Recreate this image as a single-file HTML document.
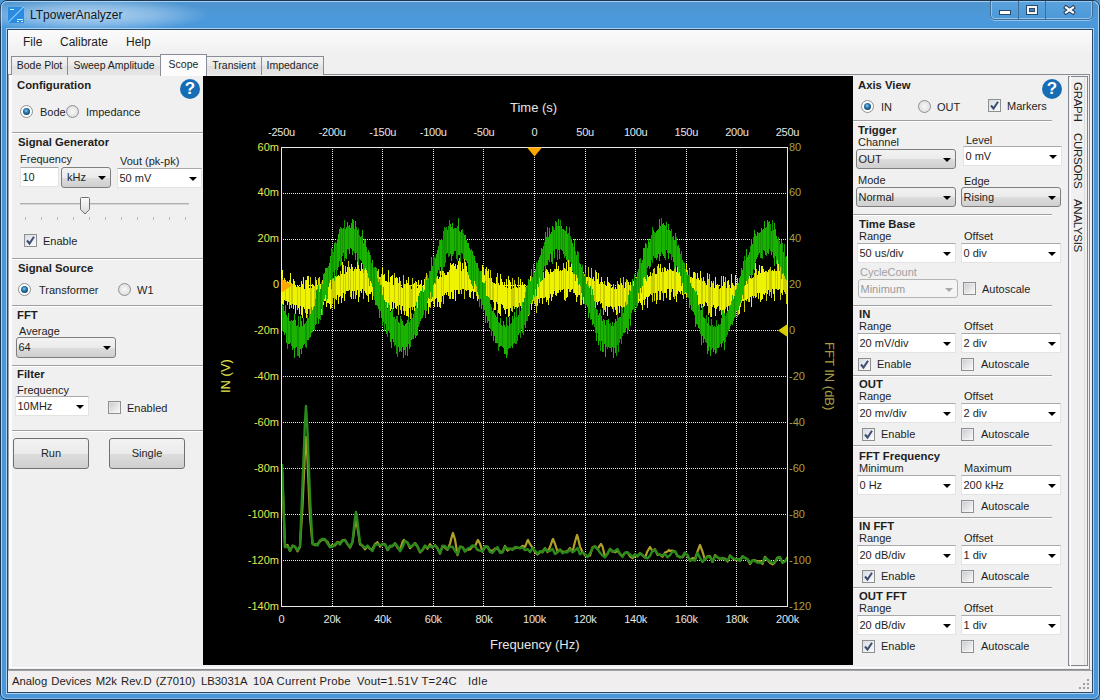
<!DOCTYPE html><html><head><meta charset="utf-8"><style>
*{margin:0;padding:0;box-sizing:border-box}
html,body{width:1100px;height:700px;overflow:hidden;background:#4a96d6}
body{position:relative;font-family:"Liberation Sans", sans-serif;font-size:10.5px;color:#000}
.a{position:absolute;white-space:nowrap}
.t{position:absolute;white-space:nowrap;font-weight:bold;font-size:11.3px;color:#1e1e1e}
.l{position:absolute;white-space:nowrap;font-size:11px;color:#1e1e1e;transform:translateY(1px)}
.cw{position:absolute;background:#fff;border-top:1px solid #a9a9a9;border-left:1px solid #e3e3e3;border-right:1px solid #e3e3e3;border-bottom:1px solid #e3e3e3}
.cb{position:absolute;border:1px solid #7e7e7e;border-radius:3px;background:linear-gradient(#f2f2f2,#ebebeb 50%,#dddddd 51%,#cfcfcf)}
.cbd{position:absolute;border:1px solid #b5b5b5;border-radius:3px;background:#f4f4f4}
.ct{position:absolute;left:1.5px;top:2.5px;font-size:11px;color:#1e1e1e}
.ar{position:absolute;right:4px;top:8px;width:0;height:0;border-left:4px solid transparent;border-right:4px solid transparent;border-top:4px solid #000}
.chk{position:absolute;width:13px;height:13px;border:1px solid #8e8f8f;background:linear-gradient(135deg,#d8dde6,#fbfbfb)}
.chk i{position:absolute;left:1px;top:1px;width:9px;height:9px;background:linear-gradient(135deg,#cfcfcf,#f6f6f6)}
.rad{position:absolute;width:13px;height:13px;border-radius:50%;border:1px solid #8e8f8f;background:radial-gradient(circle at 50% 50%,#f9f9f9,#d6d6d6)}
.rad.on{background:radial-gradient(circle at 50% 50%,#fff 0,#fff 100%)}
.rad.on i{position:absolute;left:2px;top:2px;width:7px;height:7px;border-radius:50%;background:radial-gradient(circle at 45% 40%,#8fd0f0 0,#2a7bb0 35%,#124a78 70%,#0c3050)}
.sep{position:absolute;height:2px;border-top:1px solid #a0a0a0;border-bottom:1px solid #fff}
.help{position:absolute;width:20px;height:20px;border-radius:50%;background:#176db5;color:#fff;font-weight:bold;font-size:17px;text-align:center;line-height:20px}
.btn{position:absolute;border:1px solid #707070;border-radius:3px;background:linear-gradient(#f2f2f2,#ebebeb 50%,#dddddd 51%,#cfcfcf);text-align:center;font-size:11px;color:#1e1e1e}
.tab{position:absolute;top:56px;height:19px;border:1px solid #898c95;border-bottom:none;background:linear-gradient(#f3f3f3,#e9e9e9 50%,#e0e0e0 51%,#e6e6e6);font-size:10.5px;color:#1e1e1e;text-align:center;line-height:17px}
.xl{position:absolute;font-size:11px;letter-spacing:-0.25px;color:#e6e6e6;text-align:center;width:40px;margin-left:-20px}
.yl{position:absolute;font-size:11px;color:#e5e54e;text-align:right;width:50px}
.yr{position:absolute;font-size:11px;color:#a8a040;text-align:left}
</style></head><body>

<div class="a" style="left:0;top:0;width:1100px;height:700px;border:1px solid #1c3550;border-radius:7px;background:linear-gradient(#4f95cf,#4b99dc 20px,#4a97d8 40px,#4a96d6)"></div>
<div class="a" style="left:1px;top:1px;width:1098px;height:698px;border:1px solid #a6d0f2;border-radius:6px;border-bottom-color:#7fb6e4"></div>
<div class="a" style="left:0;top:1px;width:260px;height:28px;background:radial-gradient(ellipse 120px 17px at 90px 14px,rgba(215,232,248,0.75) 0,rgba(190,218,242,0.5) 55%,rgba(150,195,235,0) 100%)"></div>
<div class="a" style="left:8px;top:7px;width:16px;height:16px;background:#2a8be0;overflow:hidden"><div class="a" style="left:-3px;top:7px;width:22px;height:1px;background:#8cd0ff;transform:rotate(-45deg)"></div><div class="a" style="left:2px;top:2px;width:4px;height:1px;background:#bff"></div><div class="a" style="left:9px;top:12px;width:6px;height:1px;background:#bfe"></div><div class="a" style="left:9px;top:14px;width:2px;height:1px;background:#bfe"></div><div class="a" style="left:13px;top:14px;width:2px;height:1px;background:#bfe"></div></div>
<div class="a" style="left:30px;top:8px;font-size:12px;color:#101820">LTpowerAnalyzer</div>
<div class="a" style="left:990px;top:1px;width:103px;height:19px;border:1px solid #3f6d96;border-top:none;border-radius:0 0 5px 5px;background:linear-gradient(#5aa2dc,#4c98d8);box-shadow:inset 0 0 0 1px rgba(190,225,250,0.6),0 1px 0 rgba(190,225,250,0.6)"></div>
<div class="a" style="left:1018px;top:1px;width:1px;height:18px;background:#3f6d96"></div>
<div class="a" style="left:1045px;top:1px;width:1px;height:18px;background:#3f6d96"></div>
<div class="a" style="left:999px;top:10px;width:12px;height:5px;background:#fff;border:1px solid #2a4a6a"></div>
<div class="a" style="left:1026px;top:5px;width:12px;height:10px;border:1px solid #2a4a6a;background:#f4f4f4"><div class="a" style="left:2px;top:2px;width:6px;height:4px;background:#4a7fb8;border:1px solid #2a4a6a"></div></div>
<svg class="a" style="left:1062px;top:4px" width="15" height="12" viewBox="0 0 15 12"><path d="M4 3.5 L11 8.5 M11 3.5 L4 8.5" stroke="#1f3550" stroke-width="4" stroke-linecap="square"/><path d="M4 3.5 L11 8.5 M11 3.5 L4 8.5" stroke="#f8f8f8" stroke-width="2.2" stroke-linecap="square"/></svg>
<div class="a" style="left:7px;top:29px;width:1086px;height:664px;border:1px solid #2b4766;background:#f0f0f0;box-shadow:0 0 0 1px #a8d0f0"></div>
<div class="a" style="left:8px;top:30px;width:1084px;height:25px;background:linear-gradient(#fbfbfb,#f0f0f0)"></div>
<div class="a" style="left:23px;top:35px;font-size:12px;color:#1e1e1e">File</div>
<div class="a" style="left:60px;top:35px;font-size:12px;color:#1e1e1e">Calibrate</div>
<div class="a" style="left:126px;top:35px;font-size:12px;color:#1e1e1e">Help</div>
<div class="a" style="left:8px;top:74px;width:1082px;height:596px;border:1px solid #898c95;border-left-color:#a0a0a0;background:#f0f0f0"></div>
<div class="a" style="left:9px;top:75px;width:3px;height:593px;background:#fbfbfb"></div>
<div class="a" style="left:9px;top:667px;width:1080px;height:1px;background:#fff"></div>
<div class="tab" style="left:11px;width:57px">Bode Plot</div>
<div class="tab" style="left:67px;width:94px">Sweep Amplitude</div>
<div class="tab" style="left:206px;width:56px">Transient</div>
<div class="tab" style="left:261px;width:63px">Impedance</div>
<div class="tab" style="left:160px;width:47px;top:54px;height:22px;background:#fcfcfc;line-height:19px">Scope</div>
<div class="a" style="left:8px;top:670px;width:1084px;height:22px;border-top:1px solid #a0a0a0;background:#f0eeee"></div>
<div class="a" style="left:12px;top:675px;font-size:11.3px;color:#1e1e1e;word-spacing:1px">Analog Devices M2k Rev.D (Z7010)</div>
<div class="a" style="left:201px;top:675px;font-size:11.3px;color:#1e1e1e">LB3031A</div>
<div class="a" style="left:253px;top:675px;font-size:11.3px;color:#1e1e1e;letter-spacing:0.25px">10A Current Probe</div>
<div class="a" style="left:357px;top:675px;font-size:11.3px;color:#1e1e1e;letter-spacing:0.25px">Vout=1.51V T=24C</div>
<div class="a" style="left:468px;top:675px;font-size:11.3px;color:#1e1e1e;letter-spacing:0.4px">Idle</div>
<div class="a" style="left:1087px;top:679px;width:2px;height:2px;background:#a0a0a0"></div>
<div class="a" style="left:1083px;top:683px;width:2px;height:2px;background:#a0a0a0"></div>
<div class="a" style="left:1087px;top:683px;width:2px;height:2px;background:#a0a0a0"></div>
<div class="a" style="left:1079px;top:687px;width:2px;height:2px;background:#a0a0a0"></div>
<div class="a" style="left:1083px;top:687px;width:2px;height:2px;background:#a0a0a0"></div>
<div class="a" style="left:1087px;top:687px;width:2px;height:2px;background:#a0a0a0"></div>
<div class="t" style="left:17px;top:79px">Configuration</div>
<div class="help" style="left:180px;top:79px">?</div>
<div class="rad on" style="left:20px;top:105px"><i></i></div><div class="l" style="left:40px;top:105px">Bode</div>
<div class="rad" style="left:66px;top:105px"></div><div class="l" style="left:86px;top:105px">Impedance</div>
<div class="sep" style="left:12px;top:132px;width:191px"></div>
<div class="t" style="left:18px;top:136px">Signal Generator</div>
<div class="l" style="left:20px;top:152px">Frequency</div>
<div class="l" style="left:120px;top:154px">Vout (pk-pk)</div>
<div class="cw" style="left:20px;top:167px;width:39px;height:20px"><span class="ct">10</span></div>
<div class="cb" style="left:61px;top:167px;width:50px;height:21px"><span class="ct" style="left:5px">kHz</span><i class="ar"></i></div>
<div class="cw" style="left:117px;top:168px;width:85px;height:20px"><span class="ct">50 mV</span><i class="ar"></i></div>
<div class="a" style="left:20px;top:203px;width:169px;height:2px;background:#d6d6d6;border-top:1px solid #b0b0b0"></div>
<svg class="a" style="left:78px;top:195px" width="14" height="22" viewBox="78 195 14 22"><defs><linearGradient id="tg" x1="0" y1="0" x2="0" y2="1"><stop offset="0" stop-color="#fafafa"/><stop offset="0.5" stop-color="#ececec"/><stop offset="1" stop-color="#d4d4d4"/></linearGradient></defs><path d="M80.5 198.5 Q80.5 197.5 81.5 197.5 H88.5 Q89.5 197.5 89.5 198.5 V209.5 L85 214 L80.5 209.5 Z" fill="url(#tg)" stroke="#707070" stroke-width="1"/></svg>
<div class="a" style="left:25px;top:217px;width:1px;height:3px;background:#b8b8b8"></div>
<div class="a" style="left:41px;top:217px;width:1px;height:3px;background:#b8b8b8"></div>
<div class="a" style="left:57px;top:217px;width:1px;height:3px;background:#b8b8b8"></div>
<div class="a" style="left:73px;top:217px;width:1px;height:3px;background:#b8b8b8"></div>
<div class="a" style="left:89px;top:217px;width:1px;height:3px;background:#b8b8b8"></div>
<div class="a" style="left:105px;top:217px;width:1px;height:3px;background:#b8b8b8"></div>
<div class="a" style="left:121px;top:217px;width:1px;height:3px;background:#b8b8b8"></div>
<div class="a" style="left:137px;top:217px;width:1px;height:3px;background:#b8b8b8"></div>
<div class="a" style="left:153px;top:217px;width:1px;height:3px;background:#b8b8b8"></div>
<div class="a" style="left:169px;top:217px;width:1px;height:3px;background:#b8b8b8"></div>
<div class="a" style="left:185px;top:217px;width:1px;height:3px;background:#b8b8b8"></div>
<div class="a" style="left:185px;top:217px;width:1px;height:3px;background:#b8b8b8"></div>
<div class="chk" style="left:24px;top:234px"><svg style="position:absolute;left:0;top:0" width="11" height="11" viewBox="0 0 11 11"><path d="M2 5.5 L4.5 8.5 L9 1.8" stroke="#3d4b70" stroke-width="2" fill="none"/></svg></div><div class="l" style="left:43px;top:234px">Enable</div>
<div class="sep" style="left:12px;top:258px;width:191px"></div>
<div class="t" style="left:18px;top:262px">Signal Source</div>
<div class="rad on" style="left:18px;top:283px"><i></i></div><div class="l" style="left:39px;top:283px">Transformer</div>
<div class="rad" style="left:118px;top:283px"></div><div class="l" style="left:137px;top:283px">W1</div>
<div class="sep" style="left:12px;top:305px;width:191px"></div>
<div class="t" style="left:17px;top:309px">FFT</div>
<div class="l" style="left:19px;top:324px">Average</div>
<div class="cb" style="left:16px;top:337px;width:100px;height:21px"><span class="ct">64</span><i class="ar"></i></div>
<div class="sep" style="left:12px;top:365px;width:191px"></div>
<div class="t" style="left:17px;top:368px">Filter</div>
<div class="l" style="left:17px;top:383px">Frequency</div>
<div class="cw" style="left:15px;top:396px;width:74px;height:20px"><span class="ct">10MHz</span><i class="ar"></i></div>
<div class="chk" style="left:108px;top:401px"><i></i></div><div class="l" style="left:127px;top:401px">Enabled</div>
<div class="sep" style="left:12px;top:430px;width:191px"></div>
<div class="btn" style="left:13px;top:438px;width:76px;height:31px;line-height:29px">Run</div>
<div class="btn" style="left:109px;top:438px;width:76px;height:31px;line-height:29px">Single</div>
<div class="t" style="left:858px;top:79px">Axis View</div>
<div class="help" style="left:1042px;top:79px">?</div>
<div class="rad on" style="left:861px;top:100px"><i></i></div><div class="l" style="left:881px;top:100px">IN</div>
<div class="rad" style="left:918px;top:100px"></div><div class="l" style="left:937px;top:100px">OUT</div>
<div class="chk" style="left:988px;top:99px"><svg style="position:absolute;left:0;top:0" width="11" height="11" viewBox="0 0 11 11"><path d="M2 5.5 L4.5 8.5 L9 1.8" stroke="#3d4b70" stroke-width="2" fill="none"/></svg></div><div class="l" style="left:1007px;top:99px">Markers</div>
<div class="sep" style="left:853px;top:120px;width:199px"></div>
<div class="t" style="left:858px;top:124px">Trigger</div>
<div class="l" style="left:858px;top:135px">Channel</div>
<div class="l" style="left:966px;top:133px">Level</div>
<div class="cb" style="left:856px;top:149px;width:100px;height:20px"><span class="ct">OUT</span><i class="ar"></i></div>
<div class="cw" style="left:963px;top:146px;width:99px;height:20px"><span class="ct">0 mV</span><i class="ar"></i></div>
<div class="l" style="left:858px;top:173px">Mode</div>
<div class="l" style="left:964px;top:174px">Edge</div>
<div class="cb" style="left:856px;top:187px;width:100px;height:20px"><span class="ct">Normal</span><i class="ar"></i></div>
<div class="cb" style="left:961px;top:187px;width:100px;height:20px"><span class="ct">Rising</span><i class="ar"></i></div>
<div class="sep" style="left:853px;top:214px;width:199px"></div>
<div class="t" style="left:859px;top:218px">Time Base</div>
<div class="l" style="left:859px;top:229px">Range</div>
<div class="l" style="left:964px;top:229px">Offset</div>
<div class="cw" style="left:857px;top:243px;width:99px;height:20px"><span class="ct">50 us/div</span><i class="ar"></i></div>
<div class="cw" style="left:961px;top:243px;width:100px;height:20px"><span class="ct">0 div</span><i class="ar"></i></div>
<div class="l" style="left:860px;top:265px;color:#a0a0a0">CycleCount</div>
<div class="cbd" style="left:858px;top:279px;width:100px;height:19px"><span class="ct" style="color:#9a9a9a">Minimum</span><i class="ar" style="border-top-color:#a8a8a8"></i></div>
<div class="chk" style="left:963px;top:282px"><i></i></div><div class="l" style="left:982px;top:282px">Autoscale</div>
<div class="sep" style="left:853px;top:305px;width:199px"></div>
<div class="t" style="left:859px;top:308px">IN</div>
<div class="l" style="left:859px;top:319px">Range</div>
<div class="l" style="left:964px;top:319px">Offset</div>
<div class="cw" style="left:857px;top:333px;width:99px;height:20px"><span class="ct">20 mV/div</span><i class="ar"></i></div>
<div class="cw" style="left:961px;top:333px;width:100px;height:20px"><span class="ct">2 div</span><i class="ar"></i></div>
<div class="chk" style="left:858px;top:358px"><svg style="position:absolute;left:0;top:0" width="11" height="11" viewBox="0 0 11 11"><path d="M2 5.5 L4.5 8.5 L9 1.8" stroke="#3d4b70" stroke-width="2" fill="none"/></svg></div><div class="l" style="left:877px;top:357px">Enable</div>
<div class="chk" style="left:961px;top:358px"><i></i></div><div class="l" style="left:981px;top:357px">Autoscale</div>
<div class="sep" style="left:853px;top:375px;width:199px"></div>
<div class="t" style="left:859px;top:378px">OUT</div>
<div class="l" style="left:859px;top:389px">Range</div>
<div class="l" style="left:964px;top:389px">Offset</div>
<div class="cw" style="left:857px;top:403px;width:99px;height:20px"><span class="ct">20 mv/div</span><i class="ar"></i></div>
<div class="cw" style="left:961px;top:403px;width:100px;height:20px"><span class="ct">2 div</span><i class="ar"></i></div>
<div class="chk" style="left:862px;top:428px"><svg style="position:absolute;left:0;top:0" width="11" height="11" viewBox="0 0 11 11"><path d="M2 5.5 L4.5 8.5 L9 1.8" stroke="#3d4b70" stroke-width="2" fill="none"/></svg></div><div class="l" style="left:881px;top:427px">Enable</div>
<div class="chk" style="left:961px;top:428px"><i></i></div><div class="l" style="left:981px;top:427px">Autoscale</div>
<div class="sep" style="left:853px;top:445px;width:199px"></div>
<div class="t" style="left:859px;top:450px">FFT Frequency</div>
<div class="l" style="left:859px;top:461px">Minimum</div>
<div class="l" style="left:964px;top:461px">Maximum</div>
<div class="cw" style="left:857px;top:475px;width:99px;height:20px"><span class="ct">0 Hz</span><i class="ar"></i></div>
<div class="cw" style="left:961px;top:475px;width:100px;height:20px"><span class="ct">200 kHz</span><i class="ar"></i></div>
<div class="chk" style="left:961px;top:500px"><i></i></div><div class="l" style="left:981px;top:499px">Autoscale</div>
<div class="sep" style="left:853px;top:517px;width:199px"></div>
<div class="t" style="left:859px;top:520px">IN FFT</div>
<div class="l" style="left:859px;top:531px">Range</div>
<div class="l" style="left:964px;top:531px">Offset</div>
<div class="cw" style="left:857px;top:545px;width:99px;height:20px"><span class="ct">20 dB/div</span><i class="ar"></i></div>
<div class="cw" style="left:961px;top:545px;width:100px;height:20px"><span class="ct">1 div</span><i class="ar"></i></div>
<div class="chk" style="left:862px;top:570px"><svg style="position:absolute;left:0;top:0" width="11" height="11" viewBox="0 0 11 11"><path d="M2 5.5 L4.5 8.5 L9 1.8" stroke="#3d4b70" stroke-width="2" fill="none"/></svg></div><div class="l" style="left:881px;top:569px">Enable</div>
<div class="chk" style="left:961px;top:570px"><i></i></div><div class="l" style="left:981px;top:569px">Autoscale</div>
<div class="sep" style="left:853px;top:587px;width:199px"></div>
<div class="t" style="left:859px;top:590px">OUT FFT</div>
<div class="l" style="left:859px;top:601px">Range</div>
<div class="l" style="left:964px;top:601px">Offset</div>
<div class="cw" style="left:857px;top:615px;width:99px;height:20px"><span class="ct">20 dB/div</span><i class="ar"></i></div>
<div class="cw" style="left:961px;top:615px;width:100px;height:20px"><span class="ct">1 div</span><i class="ar"></i></div>
<div class="chk" style="left:862px;top:640px"><svg style="position:absolute;left:0;top:0" width="11" height="11" viewBox="0 0 11 11"><path d="M2 5.5 L4.5 8.5 L9 1.8" stroke="#3d4b70" stroke-width="2" fill="none"/></svg></div><div class="l" style="left:881px;top:639px">Enable</div>
<div class="chk" style="left:961px;top:640px"><i></i></div><div class="l" style="left:981px;top:639px">Autoscale</div>
<div class="a" style="left:1068px;top:76px;width:20px;height:590px;border:1px solid #828790;background:#f0f0f0"></div>
<div class="a" style="left:1070px;top:76px;width:1px;height:590px;background:#fff"></div>
<div class="a" style="left:1084px;top:77px;width:1px;height:588px;background:#dcdcdc"></div>
<div class="a" style="left:1078px;top:82px;width:0;height:0"><div class="a" style="left:0;top:0;transform-origin:0 0;transform:rotate(90deg) translate(0,-6px);font-size:11.5px;color:#1e1e1e;letter-spacing:-0.3px">GRAPH</div></div>
<div class="a" style="left:1078px;top:133px;width:0;height:0"><div class="a" style="left:0;top:0;transform-origin:0 0;transform:rotate(90deg) translate(0,-6px);font-size:11.5px;color:#1e1e1e;letter-spacing:-0.3px">CURSORS</div></div>
<div class="a" style="left:1078px;top:199px;width:0;height:0"><div class="a" style="left:0;top:0;transform-origin:0 0;transform:rotate(90deg) translate(0,-6px);font-size:11.5px;color:#1e1e1e;letter-spacing:-0.3px">ANALYSIS</div></div>
<div class="a" style="left:203px;top:76px;width:650px;height:589px;background:#000"></div>
<div class="a" style="left:332px;top:149px;width:1px;height:457px;background:repeating-linear-gradient(#e8e8e8 0 1px,transparent 1px 2px)"></div>
<div class="a" style="left:382px;top:149px;width:1px;height:457px;background:repeating-linear-gradient(#e8e8e8 0 1px,transparent 1px 2px)"></div>
<div class="a" style="left:433px;top:149px;width:1px;height:457px;background:repeating-linear-gradient(#e8e8e8 0 1px,transparent 1px 2px)"></div>
<div class="a" style="left:483px;top:149px;width:1px;height:457px;background:repeating-linear-gradient(#e8e8e8 0 1px,transparent 1px 2px)"></div>
<div class="a" style="left:534px;top:149px;width:1px;height:457px;background:repeating-linear-gradient(#e8e8e8 0 1px,transparent 1px 2px)"></div>
<div class="a" style="left:585px;top:149px;width:1px;height:457px;background:repeating-linear-gradient(#e8e8e8 0 1px,transparent 1px 2px)"></div>
<div class="a" style="left:635px;top:149px;width:1px;height:457px;background:repeating-linear-gradient(#e8e8e8 0 1px,transparent 1px 2px)"></div>
<div class="a" style="left:686px;top:149px;width:1px;height:457px;background:repeating-linear-gradient(#e8e8e8 0 1px,transparent 1px 2px)"></div>
<div class="a" style="left:736px;top:149px;width:1px;height:457px;background:repeating-linear-gradient(#e8e8e8 0 1px,transparent 1px 2px)"></div>
<div class="a" style="left:283px;top:193px;width:504px;height:1px;background:repeating-linear-gradient(90deg,#e8e8e8 0 1px,transparent 1px 2px)"></div>
<div class="a" style="left:283px;top:239px;width:504px;height:1px;background:repeating-linear-gradient(90deg,#e8e8e8 0 1px,transparent 1px 2px)"></div>
<div class="a" style="left:283px;top:285px;width:504px;height:1px;background:repeating-linear-gradient(90deg,#e8e8e8 0 1px,transparent 1px 2px)"></div>
<div class="a" style="left:283px;top:330px;width:504px;height:1px;background:repeating-linear-gradient(90deg,#e8e8e8 0 1px,transparent 1px 2px)"></div>
<div class="a" style="left:283px;top:376px;width:504px;height:1px;background:repeating-linear-gradient(90deg,#e8e8e8 0 1px,transparent 1px 2px)"></div>
<div class="a" style="left:283px;top:422px;width:504px;height:1px;background:repeating-linear-gradient(90deg,#e8e8e8 0 1px,transparent 1px 2px)"></div>
<div class="a" style="left:283px;top:468px;width:504px;height:1px;background:repeating-linear-gradient(90deg,#e8e8e8 0 1px,transparent 1px 2px)"></div>
<div class="a" style="left:283px;top:514px;width:504px;height:1px;background:repeating-linear-gradient(90deg,#e8e8e8 0 1px,transparent 1px 2px)"></div>
<div class="a" style="left:283px;top:560px;width:504px;height:1px;background:repeating-linear-gradient(90deg,#e8e8e8 0 1px,transparent 1px 2px)"></div>
<svg class="a" style="left:0;top:0" width="1100" height="700" viewBox="0 0 1100 700">
<path d="M282.5 270 V311M283.5 282 V305M284.5 278 V300M286.5 283 V301M287.5 281 V305M288.5 282 V302M290.5 273 V305M293.5 279 V309M294.5 281 V305M295.5 285 V314M296.5 287 V305M298.5 286 V308M299.5 287 V314M301.5 281 V315M302.5 284 V318M303.5 277 V307M304.5 289 V309M306.5 280 V318M307.5 276 V314M308.5 276 V309M309.5 288 V310M312.5 284 V315M313.5 285 V316M316.5 280 V314M320.5 284 V308M323.5 280 V305M324.5 277 V301M325.5 275 V301M326.5 282 V307M327.5 279 V303M328.5 275 V303M329.5 277 V304M330.5 279 V309M336.5 274 V300M337.5 276 V295M338.5 275 V304M339.5 276 V297M341.5 274 V303M342.5 262 V298M344.5 274 V301M346.5 272 V291M347.5 267 V291M349.5 267 V290M351.5 264 V299M352.5 267 V291M354.5 269 V291M356.5 269 V295M357.5 260 V290M358.5 258 V302M360.5 271 V291M361.5 263 V293M362.5 269 V289M365.5 266 V293M366.5 263 V295M368.5 268 V302M369.5 267 V294M370.5 264 V294M371.5 274 V292M372.5 262 V300M373.5 268 V294M374.5 270 V293M379.5 277 V297M382.5 267 V297M383.5 275 V308M384.5 274 V310M385.5 281 V310M386.5 281 V308M387.5 282 V308M388.5 270 V306M390.5 277 V311M391.5 276 V309M392.5 275 V302M393.5 285 V309M395.5 278 V308M396.5 277 V309M397.5 278 V306M399.5 277 V305M401.5 287 V314M402.5 288 V306M404.5 284 V315M406.5 280 V316M407.5 283 V316M408.5 277 V318M413.5 284 V307M414.5 283 V319M416.5 282 V314M417.5 288 V317M418.5 280 V309M419.5 286 V305M420.5 284 V313M421.5 280 V307M423.5 286 V314M424.5 279 V303M428.5 280 V314M429.5 278 V307M431.5 280 V302M432.5 282 V301M434.5 269 V307M435.5 270 V299M437.5 276 V307M438.5 279 V302M439.5 277 V307M440.5 271 V308M442.5 269 V296M444.5 273 V295M445.5 275 V293M446.5 275 V295M447.5 272 V292M448.5 272 V296M450.5 263 V299M451.5 265 V292M452.5 264 V299M453.5 263 V299M454.5 266 V290M455.5 264 V301M456.5 269 V290M457.5 265 V290M458.5 261 V294M460.5 262 V290M462.5 263 V289M463.5 269 V289M465.5 262 V290M466.5 266 V291M468.5 261 V290M469.5 271 V297M470.5 270 V298M471.5 270 V292M472.5 267 V291M473.5 272 V299M474.5 273 V292M477.5 271 V301M479.5 272 V299M480.5 276 V296M482.5 265 V299M483.5 268 V305M484.5 275 V296M486.5 267 V302M488.5 269 V298M491.5 278 V300M494.5 283 V310M495.5 284 V310M496.5 277 V302M498.5 283 V313M499.5 285 V314M500.5 274 V316M501.5 279 V304M502.5 282 V305M503.5 285 V308M504.5 282 V310M505.5 287 V314M506.5 279 V309M508.5 276 V317M509.5 280 V316M510.5 282 V308M515.5 284 V307M516.5 287 V308M517.5 288 V308M519.5 287 V308M520.5 279 V306M522.5 282 V306M523.5 285 V314M524.5 284 V318M528.5 283 V316M530.5 276 V304M531.5 277 V310M537.5 272 V306M538.5 280 V299M540.5 272 V298M541.5 279 V298M542.5 275 V304M545.5 271 V297M546.5 269 V302M547.5 270 V300M548.5 272 V305M550.5 269 V294M551.5 272 V301M552.5 272 V297M553.5 271 V294M555.5 269 V295M556.5 262 V296M557.5 269 V293M558.5 266 V293M560.5 270 V292M562.5 270 V290M564.5 268 V300M566.5 262 V298M567.5 271 V297M568.5 260 V289M570.5 267 V292M571.5 263 V290M572.5 272 V289M574.5 272 V293M575.5 272 V295M576.5 273 V302M577.5 272 V297M579.5 273 V295M581.5 273 V305M583.5 272 V304M586.5 277 V295M587.5 277 V297M589.5 277 V298M590.5 278 V297M592.5 279 V306M593.5 277 V306M596.5 272 V302M597.5 279 V305M598.5 273 V302M599.5 284 V301M601.5 277 V303M602.5 282 V308M605.5 286 V312M606.5 286 V306M607.5 277 V316M608.5 282 V307M609.5 283 V307M611.5 288 V307M612.5 287 V309M615.5 287 V310M616.5 289 V315M618.5 284 V306M619.5 286 V313M621.5 283 V307M624.5 288 V307M625.5 282 V306M628.5 282 V313M630.5 282 V308M631.5 286 V304M632.5 285 V309M633.5 281 V309M636.5 277 V302M637.5 281 V305M638.5 283 V303M639.5 282 V301M640.5 276 V303M641.5 281 V305M642.5 278 V310M644.5 274 V305M645.5 279 V299M646.5 274 V297M647.5 275 V308M648.5 277 V297M649.5 276 V296M650.5 272 V294M655.5 274 V293M656.5 274 V304M658.5 264 V291M660.5 264 V300M661.5 272 V291M664.5 267 V293M665.5 268 V293M666.5 271 V298M667.5 269 V289M669.5 263 V300M670.5 269 V300M672.5 271 V289M673.5 271 V297M676.5 272 V302M677.5 263 V294M678.5 272 V291M679.5 263 V292M680.5 260 V294M681.5 269 V291M682.5 273 V295M686.5 264 V298M688.5 275 V295M689.5 268 V302M690.5 277 V303M692.5 278 V296M693.5 272 V300M694.5 272 V306M697.5 273 V299M698.5 278 V305M699.5 280 V306M700.5 271 V304M703.5 277 V307M704.5 281 V306M706.5 285 V303M707.5 273 V306M711.5 281 V317M713.5 281 V305M714.5 288 V308M715.5 277 V316M716.5 285 V309M717.5 284 V307M720.5 288 V310M722.5 286 V310M723.5 276 V316M724.5 282 V314M727.5 281 V315M728.5 280 V306M730.5 288 V317M731.5 274 V308M732.5 283 V310M733.5 286 V310M735.5 275 V305M739.5 282 V314M740.5 284 V307M742.5 278 V301M743.5 282 V301M745.5 281 V300M746.5 279 V301M747.5 274 V299M749.5 271 V302M750.5 278 V297M751.5 268 V307M752.5 278 V296M755.5 263 V298M757.5 275 V293M758.5 271 V299M759.5 265 V293M760.5 273 V302M761.5 266 V300M762.5 266 V299M763.5 269 V294M764.5 272 V295M765.5 271 V293M767.5 272 V294M768.5 270 V290M772.5 270 V289M773.5 271 V294M774.5 269 V301M776.5 271 V289M778.5 259 V290M779.5 268 V289M781.5 267 V293M782.5 272 V295" stroke="#eef400" stroke-width="1" fill="none"/>
<path d="M285.5 280 V301M289.5 280 V309M291.5 283 V308M292.5 284 V304M297.5 286 V310M300.5 287 V306M305.5 280 V313M310.5 277 V318M311.5 288 V310M314.5 286 V316M315.5 277 V312M317.5 286 V306M318.5 278 V309M319.5 277 V304M321.5 284 V315M322.5 280 V307M331.5 270 V308M332.5 271 V304M333.5 278 V298M334.5 277 V309M335.5 276 V299M340.5 271 V296M343.5 265 V293M345.5 266 V294M348.5 261 V291M350.5 269 V297M353.5 271 V299M355.5 267 V299M359.5 269 V297M363.5 269 V299M364.5 269 V291M367.5 268 V296M375.5 272 V298M376.5 276 V297M377.5 271 V296M378.5 269 V300M380.5 277 V297M381.5 274 V305M389.5 282 V305M394.5 273 V303M398.5 283 V315M400.5 281 V310M403.5 275 V311M405.5 284 V311M409.5 285 V308M410.5 285 V319M411.5 289 V307M412.5 278 V310M415.5 281 V306M422.5 286 V315M425.5 277 V309M426.5 273 V308M427.5 284 V303M430.5 280 V308M433.5 281 V303M436.5 274 V298M441.5 277 V302M443.5 271 V304M449.5 270 V299M459.5 258 V294M461.5 271 V294M464.5 259 V299M467.5 272 V290M475.5 273 V292M476.5 264 V296M478.5 275 V299M481.5 272 V294M485.5 269 V303M487.5 271 V298M489.5 278 V303M490.5 270 V300M492.5 282 V300M493.5 283 V302M497.5 273 V304M507.5 288 V309M511.5 289 V311M512.5 278 V312M513.5 288 V306M514.5 280 V309M518.5 277 V307M521.5 285 V310M525.5 287 V305M526.5 286 V312M527.5 285 V309M529.5 283 V314M532.5 283 V304M533.5 282 V301M534.5 283 V303M535.5 275 V306M536.5 270 V313M539.5 274 V303M543.5 272 V298M544.5 278 V298M549.5 274 V298M554.5 269 V291M559.5 271 V290M561.5 271 V290M563.5 263 V289M565.5 269 V301M569.5 266 V292M573.5 272 V293M578.5 272 V295M580.5 273 V305M582.5 265 V294M584.5 274 V296M585.5 266 V295M588.5 267 V302M591.5 268 V297M594.5 281 V310M595.5 270 V309M600.5 282 V304M603.5 284 V315M604.5 281 V310M610.5 284 V306M613.5 284 V312M614.5 289 V307M617.5 281 V316M620.5 278 V306M622.5 285 V311M623.5 277 V307M626.5 279 V315M627.5 280 V314M629.5 285 V306M634.5 285 V310M635.5 284 V304M643.5 278 V300M651.5 276 V295M652.5 273 V302M653.5 269 V293M654.5 268 V301M657.5 266 V300M659.5 268 V300M662.5 268 V293M663.5 272 V301M668.5 270 V289M671.5 270 V292M674.5 259 V299M675.5 267 V296M683.5 274 V299M684.5 274 V294M685.5 273 V294M687.5 270 V295M691.5 277 V296M695.5 273 V301M696.5 279 V298M701.5 278 V308M702.5 281 V304M705.5 283 V302M708.5 279 V315M709.5 274 V313M710.5 287 V317M712.5 283 V307M718.5 285 V306M719.5 289 V311M721.5 276 V315M725.5 277 V309M726.5 288 V307M729.5 286 V307M734.5 286 V311M736.5 284 V311M737.5 278 V303M738.5 284 V315M741.5 282 V303M744.5 281 V312M748.5 278 V302M753.5 277 V298M754.5 273 V296M756.5 269 V297M766.5 271 V301M769.5 269 V296M770.5 267 V292M771.5 271 V298M775.5 271 V289M777.5 259 V290M780.5 262 V300M783.5 266 V290M784.5 263 V292M785.5 269 V294M786.5 264 V304" stroke="#c8cc00" stroke-width="1" fill="none"/>
<path d="M283.5 306 V332M284.5 311 V335M285.5 305 V333M286.5 315 V343M288.5 313 V344M289.5 321 V344M292.5 321 V350M293.5 320 V348M294.5 314 V358M295.5 320 V348M296.5 326 V347M299.5 327 V358M300.5 316 V349M301.5 321 V354M302.5 326 V348M303.5 318 V345M304.5 324 V344M307.5 315 V340M308.5 318 V340M310.5 314 V337M311.5 307 V333M312.5 310 V332M313.5 307 V330M315.5 299 V325M318.5 285 V324M319.5 292 V319M322.5 284 V315M323.5 274 V302M324.5 273 V299M325.5 268 V295M326.5 268 V301M327.5 268 V299M329.5 263 V283M330.5 256 V280M334.5 243 V281M337.5 239 V270M338.5 234 V267M339.5 229 V261M341.5 228 V265M343.5 228 V253M345.5 229 V258M346.5 227 V259M347.5 222 V249M349.5 225 V254M350.5 228 V248M351.5 223 V249M352.5 219 V255M353.5 220 V251M355.5 221 V260M357.5 230 V262M360.5 237 V260M362.5 230 V264M363.5 243 V273M364.5 239 V270M365.5 240 V268M366.5 247 V270M368.5 250 V278M369.5 252 V286M372.5 260 V287M375.5 267 V305M376.5 268 V305M377.5 278 V306M378.5 282 V309M379.5 279 V318M381.5 285 V318M382.5 295 V326M383.5 287 V322M385.5 302 V324M386.5 302 V334M388.5 303 V331M390.5 312 V342M391.5 311 V348M392.5 308 V339M393.5 317 V342M395.5 319 V345M398.5 322 V347M399.5 323 V352M401.5 319 V352M402.5 321 V347M403.5 325 V358M404.5 326 V350M405.5 324 V355M406.5 323 V347M407.5 320 V356M409.5 322 V349M411.5 313 V340M413.5 314 V339M415.5 308 V338M416.5 302 V336M417.5 308 V335M420.5 291 V321M422.5 287 V318M424.5 290 V310M425.5 277 V318M426.5 280 V311M427.5 275 V301M428.5 278 V298M430.5 271 V292M431.5 257 V299M432.5 266 V297M435.5 258 V284M436.5 254 V278M437.5 250 V273M438.5 246 V270M440.5 240 V267M441.5 239 V275M447.5 230 V253M450.5 224 V254M451.5 227 V261M452.5 223 V256M453.5 229 V254M455.5 228 V251M458.5 218 V255M459.5 231 V255M461.5 230 V253M464.5 235 V259M465.5 235 V260M466.5 240 V261M467.5 243 V263M468.5 243 V275M469.5 248 V279M470.5 250 V280M472.5 251 V286M474.5 256 V281M476.5 263 V286M477.5 263 V292M480.5 271 V299M481.5 271 V309M483.5 283 V312M484.5 283 V310M485.5 281 V323M486.5 296 V316M487.5 296 V323M488.5 297 V321M489.5 298 V328M492.5 311 V331M493.5 308 V341M494.5 313 V336M495.5 315 V343M496.5 317 V343M497.5 310 V343M499.5 323 V347M500.5 318 V346M501.5 325 V346M503.5 321 V348M504.5 325 V354M505.5 327 V354M506.5 317 V358M509.5 317 V348M512.5 316 V348M514.5 312 V343M518.5 315 V335M521.5 308 V329M522.5 302 V333M525.5 292 V328M528.5 279 V315M529.5 280 V315M530.5 281 V304M531.5 269 V303M532.5 277 V300M534.5 272 V297M535.5 269 V289M538.5 260 V287M539.5 257 V278M540.5 255 V282M541.5 248 V281M543.5 246 V271M545.5 232 V271M546.5 237 V265M547.5 227 V265M548.5 237 V260M549.5 228 V262M550.5 234 V254M551.5 232 V262M552.5 226 V264M554.5 230 V258M556.5 222 V249M558.5 219 V250M559.5 226 V259M561.5 226 V250M563.5 229 V254M565.5 231 V256M566.5 226 V260M567.5 234 V262M571.5 239 V264M572.5 243 V271M574.5 239 V274M576.5 255 V275M579.5 263 V284M580.5 264 V286M581.5 267 V293M585.5 273 V307M586.5 284 V305M587.5 281 V307M588.5 286 V318M589.5 288 V313M591.5 295 V319M592.5 289 V325M593.5 295 V324M596.5 309 V341M598.5 315 V345M599.5 313 V341M601.5 316 V341M602.5 321 V352M604.5 320 V344M605.5 325 V357M608.5 319 V347M611.5 326 V352M612.5 322 V347M613.5 326 V358M615.5 319 V353M620.5 317 V339M623.5 313 V333M624.5 307 V333M625.5 302 V332M626.5 305 V328M627.5 304 V334M628.5 295 V330M630.5 291 V326M631.5 285 V313M632.5 279 V310M637.5 272 V306M639.5 259 V299M641.5 263 V293M642.5 260 V286M643.5 248 V278M644.5 248 V277M645.5 243 V279M647.5 248 V268M648.5 239 V266M649.5 242 V269M650.5 239 V267M653.5 230 V256M655.5 233 V258M656.5 231 V260M657.5 230 V258M658.5 229 V254M659.5 219 V261M660.5 226 V256M662.5 224 V254M663.5 223 V256M664.5 225 V258M666.5 222 V250M668.5 224 V259M669.5 230 V253M670.5 231 V254M673.5 236 V262M674.5 240 V269M675.5 233 V267M677.5 246 V267M678.5 245 V273M679.5 248 V272M682.5 260 V283M684.5 263 V293M685.5 269 V292M686.5 272 V293M689.5 269 V308M691.5 286 V310M693.5 288 V312M694.5 290 V315M695.5 292 V327M696.5 291 V324M698.5 305 V328M699.5 304 V329M701.5 310 V345M702.5 306 V336M703.5 317 V343M704.5 318 V339M707.5 323 V354M708.5 317 V351M710.5 326 V356M713.5 327 V352M715.5 327 V354M717.5 326 V348M718.5 324 V348M721.5 318 V347M722.5 310 V343M723.5 310 V341M724.5 313 V350M728.5 310 V331M729.5 306 V329M730.5 305 V326M731.5 301 V324M732.5 295 V325M733.5 299 V321M735.5 290 V317M736.5 289 V311M737.5 285 V317M738.5 283 V310M739.5 278 V306M740.5 276 V303M741.5 268 V300M742.5 270 V295M743.5 261 V299M746.5 249 V281M747.5 257 V284M748.5 255 V279M749.5 252 V276M751.5 239 V279M752.5 244 V275M754.5 230 V270M755.5 234 V262M756.5 236 V259M757.5 232 V257M759.5 233 V253M761.5 228 V258M763.5 229 V250M764.5 221 V251M765.5 228 V255M767.5 220 V253M768.5 222 V254M771.5 231 V255M773.5 230 V258M774.5 223 V266M775.5 229 V256M776.5 236 V264M777.5 239 V260M780.5 244 V267M781.5 240 V279M783.5 252 V273M786.5 256 V280" stroke="#1ab400" stroke-width="1" fill="none"/>
<path d="M282.5 304 V331M287.5 317 V349M290.5 321 V343M291.5 320 V346M297.5 325 V356M298.5 316 V356M305.5 323 V347M306.5 321 V348M309.5 309 V338M314.5 306 V330M316.5 290 V324M317.5 289 V318M320.5 289 V320M321.5 282 V309M328.5 266 V287M331.5 248 V289M332.5 249 V279M333.5 252 V272M335.5 242 V270M336.5 243 V277M340.5 227 V266M342.5 229 V256M344.5 220 V261M348.5 226 V250M354.5 229 V253M356.5 227 V253M358.5 228 V265M359.5 235 V259M361.5 236 V261M367.5 252 V273M370.5 255 V281M371.5 263 V283M373.5 268 V296M374.5 267 V300M380.5 285 V311M384.5 300 V331M387.5 309 V337M389.5 305 V333M394.5 317 V346M396.5 316 V354M397.5 316 V357M400.5 316 V351M408.5 317 V344M410.5 320 V347M412.5 318 V339M414.5 311 V335M418.5 296 V327M419.5 293 V324M421.5 291 V319M423.5 292 V315M429.5 271 V299M433.5 256 V285M434.5 257 V283M439.5 239 V274M442.5 240 V271M443.5 231 V267M444.5 227 V267M445.5 228 V263M446.5 227 V254M448.5 226 V257M449.5 220 V256M454.5 228 V251M456.5 228 V259M457.5 226 V261M460.5 232 V262M462.5 229 V254M463.5 233 V259M471.5 249 V284M473.5 255 V289M475.5 261 V284M478.5 268 V295M479.5 271 V307M482.5 282 V305M490.5 304 V329M491.5 307 V336M498.5 322 V351M502.5 326 V347M507.5 325 V355M508.5 326 V349M510.5 324 V348M511.5 323 V346M513.5 319 V344M515.5 317 V344M516.5 307 V344M517.5 317 V341M519.5 303 V333M520.5 311 V338M523.5 302 V335M524.5 298 V325M526.5 287 V321M527.5 285 V321M533.5 264 V295M536.5 262 V296M537.5 263 V284M542.5 249 V280M544.5 242 V266M553.5 227 V251M555.5 221 V249M557.5 226 V260M560.5 220 V249M562.5 229 V251M564.5 230 V258M568.5 233 V260M569.5 227 V267M570.5 236 V262M573.5 247 V274M575.5 251 V281M577.5 251 V278M578.5 252 V285M582.5 265 V300M583.5 273 V297M584.5 276 V304M590.5 286 V320M594.5 301 V327M595.5 308 V333M597.5 310 V333M600.5 309 V351M603.5 319 V352M606.5 320 V347M607.5 320 V349M609.5 324 V348M610.5 323 V348M614.5 323 V348M616.5 321 V356M617.5 314 V345M618.5 318 V352M619.5 317 V343M621.5 307 V344M622.5 308 V336M629.5 290 V319M633.5 286 V309M634.5 274 V312M635.5 279 V306M636.5 278 V308M638.5 269 V293M640.5 258 V288M646.5 244 V281M651.5 235 V260M652.5 227 V263M654.5 232 V258M661.5 218 V252M665.5 226 V260M667.5 230 V253M671.5 229 V260M672.5 237 V257M676.5 237 V266M680.5 254 V276M681.5 251 V286M683.5 262 V294M687.5 275 V297M688.5 275 V298M690.5 283 V305M692.5 288 V311M697.5 295 V325M700.5 310 V334M705.5 319 V342M706.5 315 V343M709.5 325 V347M711.5 319 V350M712.5 325 V348M714.5 326 V350M716.5 320 V353M719.5 325 V347M720.5 324 V344M725.5 316 V342M726.5 313 V337M727.5 311 V335M734.5 296 V318M744.5 256 V286M745.5 260 V285M750.5 246 V275M753.5 237 V269M758.5 233 V255M760.5 232 V258M762.5 230 V259M766.5 227 V256M769.5 221 V249M770.5 224 V251M772.5 220 V252M778.5 237 V264M779.5 241 V271M782.5 243 V274M784.5 244 V276M785.5 257 V279" stroke="#119600" stroke-width="1" fill="none"/>
<path d="M282 470 L282.5 479.7 L285 547.3 L287.5 544.9 L290 551.1 L292.5 545.6 L295 546.8 L297.5 551.3 L300 546.9 L302.5 506.2 L305 450.4 L306 437 L307.5 459.6 L310 516.9 L312.5 543.3 L315 545.2 L317.5 543.9 L320 541.5 L322.5 539.4 L325 540 L327.5 541.8 L330 546.9 L332.5 544.8 L335 545.5 L337.5 542 L340 543.1 L342.5 540.3 L345 539.8 L347.5 544.2 L350 547.7 L352.5 542.4 L355 524.5 L356 520 L357.5 527.7 L360 544.3 L362.5 545.8 L365 549.3 L367.5 546.2 L370 548.9 L372.5 549.3 L375 544.1 L377.5 542.2 L380 546.5 L382.5 543.9 L385 544.2 L387.5 550 L390 546.6 L392.5 546.2 L395 543.1 L397.5 547.7 L400 549.9 L402.5 542 L404 540 L405 541.2 L407.5 542.6 L410 548.2 L412.5 545.7 L415 543 L417.5 546.5 L420 552.4 L422.5 550 L425 546.1 L427.5 548.8 L430 544.2 L432.5 547.5 L435 545.2 L437.5 548 L440 553.6 L442.5 545.8 L445 547.7 L447.5 549.9 L450 543.6 L452.5 534 L453 533 L455 539.3 L457.5 555.2 L460 546.5 L462.5 547.1 L465 551.1 L467.5 549.6 L470 549.5 L472.5 546.4 L475 546.2 L477.5 540.6 L478 540 L480 543.7 L482.5 551.7 L485 547.1 L487.5 546.6 L490 550.4 L492.5 551 L495 548.6 L497.5 548.8 L500 551.5 L502.5 551.8 L505 546 L507.5 550.5 L510 548.8 L512.5 548.8 L515 548.2 L517.5 547.6 L520 548.1 L522.5 545.8 L525 547 L527.5 540.7 L528 540 L530 544.2 L532.5 547.7 L535 552.2 L537.5 554.4 L540 552.1 L542.5 551.5 L545 548.1 L547.5 552.1 L550 547.1 L552.5 539.8 L553 539 L555 543.8 L557.5 551.5 L560 549.6 L562.5 552.1 L565 551.7 L567.5 551.1 L570 548 L572.5 552 L575 541.8 L577 535 L577.5 536.1 L580 546.6 L582.5 552.2 L585 555.4 L587.5 556.3 L590 555.5 L592.5 547.6 L595 546.3 L597.5 549.2 L600 545.4 L601 544 L602.5 546.5 L605 556.7 L607.5 554.1 L610 548.8 L612.5 551.2 L615 552.3 L617.5 550.9 L620 554 L622.5 555.8 L625 552.8 L627.5 552.4 L630 556.4 L632.5 558.1 L635 555.6 L637.5 556.1 L640 553.3 L642.5 555.4 L645 557.5 L647.5 551.2 L650 547 L650 547 L652.5 551.3 L655 549.2 L657.5 554.9 L660 554.5 L662.5 556.8 L665 552.6 L667.5 551.6 L669 550 L670 550.9 L672.5 550.6 L675 551.5 L677.5 556.1 L680 556.7 L682.5 557.3 L685 553.6 L687.5 555.1 L690 560.8 L692.5 558.1 L695 558.8 L697.5 551.5 L700 545 L700 545 L702.5 551.6 L705 560 L707.5 556.3 L710 556.1 L712.5 561.9 L715 555.1 L717.5 557.3 L720 559 L722.5 558.4 L725 558.5 L727.5 561.6 L730 555.5 L732.5 558.4 L735 559.6 L737.5 560.2 L740 559.2 L742.5 557 L745 557.8 L747.5 559.2 L750 564.1 L752.5 560.3 L755 560.3 L757.5 561.6 L760 561 L762.5 564 L765 556.8 L767.5 560 L770 562.9 L772.5 564.3 L775 562.3 L777.5 557.6 L780 558.2 L782.5 562.2 L785 561.5 L787.5 557.2" stroke="#b0a028" stroke-width="2.2" fill="none" stroke-linejoin="round"/>
<path d="M282 464 L282.5 474.5 L285 546.9 L287.5 546.4 L290 550.7 L292.5 546 L295 546.7 L297.5 550.2 L300 546 L302.5 484.3 L305 421.3 L306 406 L307.5 431.6 L310 497.1 L312.5 544.2 L315 544.2 L317.5 545.4 L320 540.2 L322.5 538.8 L325 539.1 L327.5 543.6 L330 547.2 L332.5 546.5 L335 544.2 L337.5 542.5 L340 544.5 L342.5 540.8 L345 540.3 L347.5 544.2 L350 546.9 L352.5 541.5 L355 517.9 L356 512 L357.5 522 L360 543 L362.5 545.5 L365 548 L367.5 545.6 L370 548.5 L372.5 551.1 L375 545 L377.5 544.1 L380 545 L382.5 544.6 L385 544.1 L387.5 550.1 L390 545.7 L392.5 546 L395 543.2 L397.5 546.5 L400 551.3 L402.5 547.2 L405 541 L407.5 542.6 L410 546.8 L412.5 545.7 L415 543.3 L417.5 546.9 L420 551.8 L422.5 550.1 L425 545.5 L427.5 547.6 L430 546.3 L432.5 546.6 L435 545.5 L437.5 548.8 L440 553.4 L442.5 545.9 L445 546 L447.5 549.3 L450 546.7 L452.5 546.6 L455 551 L457.5 554 L460 546.9 L462.5 547.4 L465 551.6 L467.5 548.7 L470 547.7 L472.5 545.5 L475 546.1 L477.5 550 L480 550.6 L482.5 551.4 L485 546.1 L487.5 546.9 L490 551.9 L492.5 552.9 L495 549.5 L497.5 547 L500 552.7 L502.5 552.5 L505 547.1 L507.5 548.5 L510 548.7 L512.5 549.9 L515 547 L517.5 547.7 L520 548 L522.5 547.5 L525 550.2 L527.5 549.1 L530 552.1 L532.5 547.9 L535 550.7 L537.5 553.6 L540 551.1 L542.5 552.4 L545 548.5 L547.5 551.2 L550 550.9 L552.5 548.8 L555 554 L557.5 552.3 L560 549.6 L562.5 553.2 L565 552 L567.5 552.3 L570 549.2 L572.5 552.2 L575 550.5 L577.5 548 L580 554.2 L582.5 552.4 L585 554.2 L587.5 557 L590 553.4 L592.5 548.1 L595 546.5 L597.5 548.7 L600 552.8 L602.5 555.5 L605 557.3 L607.5 553.5 L610 549.1 L612.5 551.9 L615 550.8 L617.5 549 L620 554.1 L622.5 556.9 L625 552.7 L627.5 552.4 L630 554.5 L632.5 556.8 L635 554.2 L637.5 556.5 L640 553.1 L642.5 555.1 L645 557.3 L647.5 558.3 L650 555.9 L652.5 550.6 L655 549.8 L657.5 553.7 L660 555.1 L662.5 555.4 L665 554 L667.5 557.3 L670 555.1 L672.5 551.7 L675 551.2 L677.5 555.6 L680 557.6 L682.5 556.5 L685 552.5 L687.5 555.6 L690 560.6 L692.5 559.8 L695 560.5 L697.5 552.9 L700 557.8 L702.5 561.9 L705 559 L707.5 556.2 L710 557.4 L712.5 561.6 L715 556.1 L717.5 557.2 L720 558.8 L722.5 557.8 L725 559.7 L727.5 560.6 L730 556.2 L732.5 557.8 L735 559 L737.5 559 L740 561.1 L742.5 555.9 L745 558.1 L747.5 559.1 L750 563 L752.5 560.2 L755 561.2 L757.5 562.6 L760 562.7 L762.5 562.5 L765 557.7 L767.5 559.5 L770 561.5 L772.5 563.1 L775 562 L777.5 557.7 L780 557 L782.5 563 L785 561.1 L787.5 558.3" stroke="#2a8a1c" stroke-width="2.4" fill="none" stroke-linejoin="round"/>
<rect x="281.5" y="147.5" width="506" height="459" fill="none" stroke="#e8e8e8" stroke-width="1"/>
<path d="M527 147.5 L542 147.5 L534.5 156.5 Z" fill="#ffa500"/>
<path d="M281.5 278.5 L292 285.5 L281.5 292.5 Z" fill="#ffa500"/>
<path d="M787.5 324 L778 330.5 L787.5 337 Z" fill="#d8ca00"/>
</svg>
<div class="xl" style="left:281.5px;top:126px">-250u</div>
<div class="xl" style="left:332.1px;top:126px">-200u</div>
<div class="xl" style="left:382.7px;top:126px">-150u</div>
<div class="xl" style="left:433.3px;top:126px">-100u</div>
<div class="xl" style="left:483.9px;top:126px">-50u</div>
<div class="xl" style="left:534.5px;top:126px">0</div>
<div class="xl" style="left:585.1px;top:126px">50u</div>
<div class="xl" style="left:635.7px;top:126px">100u</div>
<div class="xl" style="left:686.3px;top:126px">150u</div>
<div class="xl" style="left:736.9px;top:126px">200u</div>
<div class="xl" style="left:787.5px;top:126px">250u</div>
<div class="xl" style="left:281.5px;top:613px">0</div>
<div class="xl" style="left:332.1px;top:613px">20k</div>
<div class="xl" style="left:382.7px;top:613px">40k</div>
<div class="xl" style="left:433.3px;top:613px">60k</div>
<div class="xl" style="left:483.9px;top:613px">80k</div>
<div class="xl" style="left:534.5px;top:613px">100k</div>
<div class="xl" style="left:585.1px;top:613px">120k</div>
<div class="xl" style="left:635.7px;top:613px">140k</div>
<div class="xl" style="left:686.3px;top:613px">160k</div>
<div class="xl" style="left:736.9px;top:613px">180k</div>
<div class="xl" style="left:787.5px;top:613px">200k</div>
<div class="yl" style="left:229px;top:140.5px">60m</div>
<div class="yl" style="left:229px;top:186.4px">40m</div>
<div class="yl" style="left:229px;top:232.3px">20m</div>
<div class="yl" style="left:229px;top:278.2px">0</div>
<div class="yl" style="left:229px;top:324.1px">-20m</div>
<div class="yl" style="left:229px;top:370px">-40m</div>
<div class="yl" style="left:229px;top:415.9px">-60m</div>
<div class="yl" style="left:229px;top:461.8px">-80m</div>
<div class="yl" style="left:229px;top:507.7px">-100m</div>
<div class="yl" style="left:229px;top:553.6px">-120m</div>
<div class="yl" style="left:229px;top:599.5px">-140m</div>
<div class="yr" style="left:789px;top:140.5px">80</div>
<div class="yr" style="left:789px;top:186.4px">60</div>
<div class="yr" style="left:789px;top:232.3px">40</div>
<div class="yr" style="left:789px;top:278.2px">20</div>
<div class="yr" style="left:789px;top:324.1px">0</div>
<div class="yr" style="left:789px;top:370px">-20</div>
<div class="yr" style="left:789px;top:415.9px">-40</div>
<div class="yr" style="left:789px;top:461.8px">-60</div>
<div class="yr" style="left:789px;top:507.7px">-80</div>
<div class="yr" style="left:789px;top:553.6px">-100</div>
<div class="yr" style="left:789px;top:599.5px">-120</div>
<div class="a" style="left:510px;top:100px;font-size:13px;color:#e6e6e6">Time (s)</div>
<div class="a" style="left:490px;top:637px;font-size:13px;color:#e6e6e6">Frequency (Hz)</div>
<div class="a" style="left:217.5px;top:393px;width:0;height:0"><div class="a" style="left:0;top:0;transform-origin:0 0;transform:rotate(-90deg);font-size:13px;color:#e5e54e">IN (V)</div></div>
<div class="a" style="left:837px;top:342px;width:0;height:0"><div class="a" style="left:0;top:0;transform-origin:0 0;transform:rotate(90deg);font-size:13px;color:#a8a040">FFT IN (dB)</div></div>
</body></html>
